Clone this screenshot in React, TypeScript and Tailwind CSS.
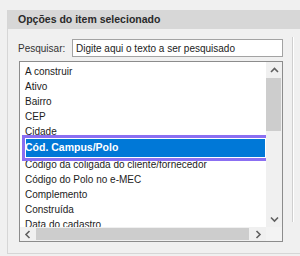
import React from 'react';

const items = [
  'A construir',
  'Ativo',
  'Bairro',
  'CEP',
  'Cidade',
  'Cód. Campus/Polo',
  'Código da coligada do cliente/fornecedor',
  'Código do Polo no e-MEC',
  'Complemento',
  'Construída',
  'Data do cadastro',
];

const selected = 'Cód. Campus/Polo';

const Chevron = ({ dir }: { dir: 'up' | 'down' | 'left' | 'right' }) => {
  const paths = {
    up: 'M1 5 L4.5 1.5 L8 5',
    down: 'M1 1.5 L4.5 5 L8 1.5',
    left: 'M5.5 1 L2 4.5 L5.5 8',
    right: 'M2.5 1 L6 4.5 L2.5 8',
  };
  const horiz = dir === 'left' || dir === 'right';
  return (
    <svg width={horiz ? 8 : 9} height={horiz ? 9 : 7} viewBox={horiz ? '0 0 8 9' : '0 0 9 7'}>
      <path d={paths[dir]} fill="none" stroke="#606060" strokeWidth="1.6" />
    </svg>
  );
};

export default function App() {
  return (
    <div className="w-[300px] h-[256px] overflow-hidden bg-[#f0f0f0] pt-[10px] pl-[7px] font-['Liberation_Sans',Arial,sans-serif] text-[#1c1c1c]">
      <div className="h-[244px] border-l border-b border-[#d6d6d6] flex flex-col">
        {/* cabeçalho */}
        <div className="h-[19px] shrink-0 bg-[#d7d7d7] pl-[10px] flex items-center text-[10.5px] font-bold text-[#2a2a2a]">
          Opções do item selecionado
        </div>

        <div className="flex flex-1 pt-[10px]">
          <div className="w-[264px] ml-[11px] flex flex-col">
            {/* pesquisa */}
            <div className="flex items-center h-[18px]">
              <div className="w-[54px] -ml-px text-[10px] text-[#333]">Pesquisar:</div>
              <div className="flex-1 h-[18px] border border-[#a3a3a3] bg-white pl-[3px] flex items-center text-[10px] text-[#222]">
                Digite aqui o texto a ser pesquisado
              </div>
            </div>

            {/* lista */}
            <div className="mt-[4px] h-[181px] border border-[#8c8c8c] bg-white flex flex-col">
              <div className="flex h-[165px]">
                <div className="flex-1 overflow-hidden pt-[2px] text-[10px]">
                  {items.map((item) =>
                    item === selected ? (
                      <div
                        key={item}
                        className="relative z-10 h-[18px] ml-[6px] mr-px bg-[#0078d7] text-white font-bold text-[10.5px] flex items-center -indent-px shadow-[0_0_0_1px_#ffffff,0_0_0_4px_#8b6ff2]"
                      >
                        {item}
                      </div>
                    ) : (
                      <div key={item} className="h-[15px] leading-[15px] pl-[5px] whitespace-nowrap">
                        {item}
                      </div>
                    )
                  )}
                </div>
                <div className="w-[16px] bg-[#f0f0f0] flex flex-col">
                  <div className="h-[16px] flex items-center justify-center">
                    <Chevron dir="up" />
                  </div>
                  <div className="h-[53px] bg-[#cdcdcd] mr-px"></div>
                  <div className="flex-1"></div>
                  <div className="h-[16px] flex items-center justify-center">
                    <Chevron dir="down" />
                  </div>
                </div>
              </div>
              <div className="flex h-[14px] bg-[#f0f0f0]">
                <div className="w-[16px] flex items-center justify-center">
                  <Chevron dir="left" />
                </div>
                <div className="w-[213px] bg-[#cdcdcd] my-px"></div>
                <div className="flex-1 flex items-center justify-center">
                  <Chevron dir="right" />
                </div>
                <div className="w-[16px] bg-[#f3f3f3]"></div>
              </div>
            </div>
          </div>

          {/* separador */}
          <div className="ml-[9px] mt-[-2px] w-[2px] h-[185px] border-l border-[#cfcfcf] bg-white"></div>
        </div>
      </div>
    </div>
  );
}
